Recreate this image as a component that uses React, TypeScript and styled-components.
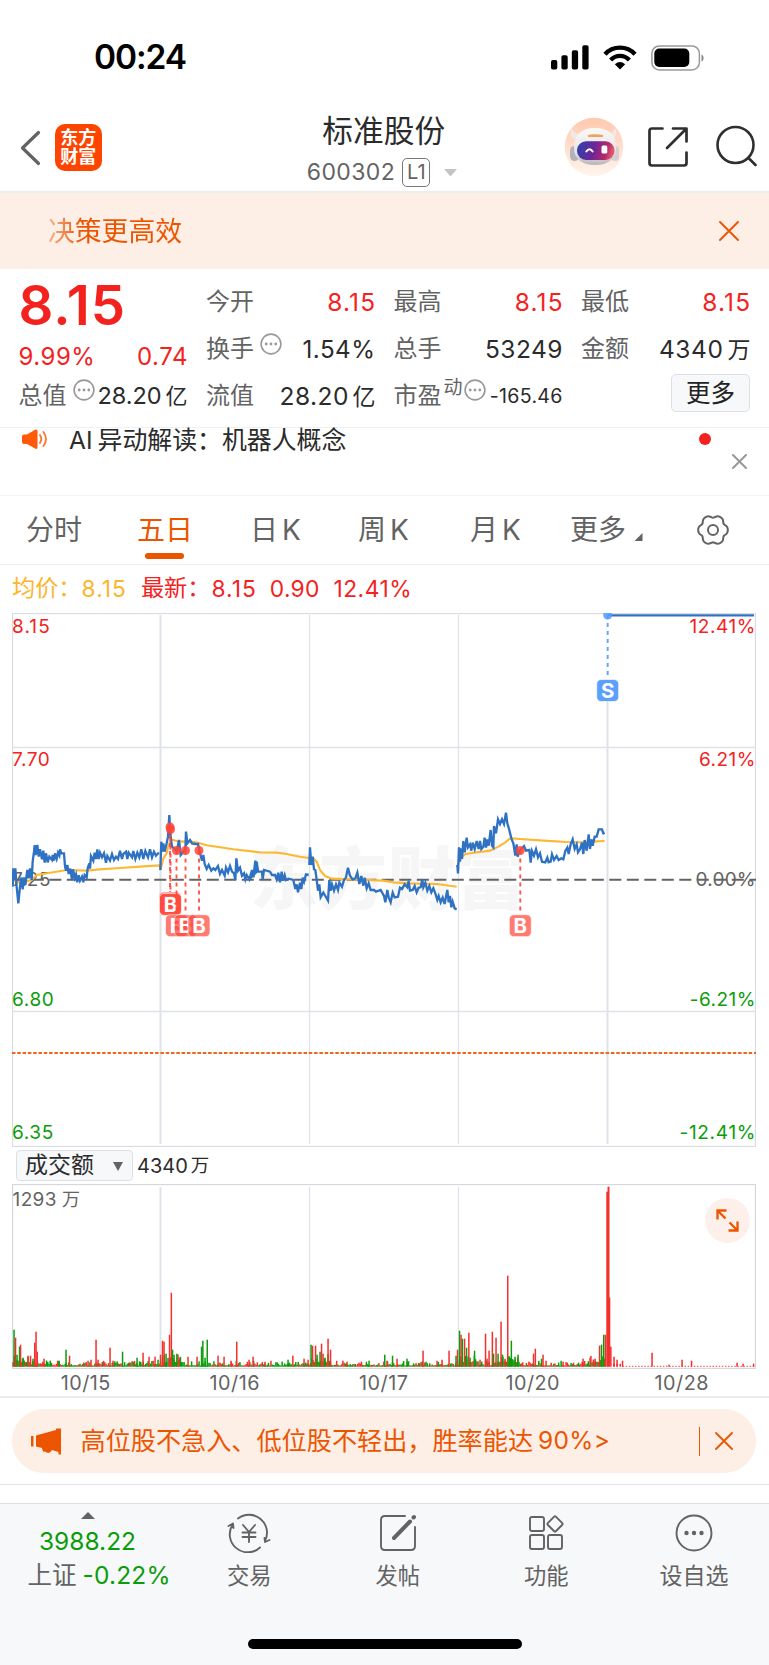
import React from "react";
import styled, { createGlobalStyle, css } from "styled-components";

const RED = "#f4221f";
const GREEN = "#0a9d0a";
const ORANGE = "#ec5500";
const GREY = "#636363";
const DARK = "#2b2b2b";

const Global = createGlobalStyle`
  * { box-sizing: border-box; }
  body {
    margin: 0;
    background: #fff;
    font-family: Inter, "Noto Sans CJK SC", sans-serif;
    color: ${DARK};
  }
  svg { display: block; flex: none; }
`;

const Screen = styled.div`
  width: 769px;
  height: 1665px;
  display: flex;
  flex-direction: column;
  overflow: hidden;
  background: #fff;
`;

const Txt = styled.span<{ $s: number; $c?: string; $w?: number; $ls?: number; $ml?: number }>`
  font-size: ${(p) => p.$s}px;
  color: ${(p) => p.$c ?? DARK};
  font-weight: ${(p) => p.$w ?? 400};
  letter-spacing: ${(p) => p.$ls ?? 0}px;
  margin-left: ${(p) => p.$ml ?? 0}px;
  margin-right: ${(p) => -(p.$ls ?? 0)}px;
  line-height: 1.2;
  white-space: nowrap;
  flex: none;
`;

const StatusBar = styled.div`
  height: 100px;
  flex: none;
  display: flex;
  align-items: center;
  justify-content: space-between;
  padding: 15px 64px 0 94px;
`;

const StatusIcons = styled.div`
  display: flex;
  align-items: center;
  gap: 14px;
`;

const Header = styled.header`
  height: 93px;
  flex: none;
  display: grid;
  grid-template-columns: 1fr auto 1fr;
  border-bottom: 2px solid #ededee;
`;

const HeaderLeft = styled.div`
  display: flex;
  align-items: center;
  gap: 14px;
  padding: 4px 0 0 20px;
`;

const AppLogo = styled.div`
  width: 46.5px;
  height: 47px;
  border-radius: 10px;
  background: #ff4400;
  color: #fff;
  font-weight: 700;
  font-size: 18px;
  line-height: 19px;
  text-align: center;
  padding-top: 4px;
`;

const HeaderTitle = styled.div`
  display: flex;
  flex-direction: column;
  align-items: center;
  padding: 13px 1.5px 0 0;
`;

const CodeRow = styled.div`
  display: flex;
  align-items: center;
  margin-top: 8.500px;
  padding-right: 4px;
`;

const LevelTag = styled.span`
  width: 28px;
  height: 29px;
  border: 1.5px solid #777;
  border-radius: 5px;
  color: ${GREY};
  font-size: 20px;
  line-height: 27px;
  text-align: center;
  margin: 0 13.5px 0 7.5px;
`;

const HeaderRight = styled.div`
  display: flex;
  align-items: center;
  justify-content: flex-end;
  padding: 3px 12px 0 0;
`;

const Notice = styled.div`
  height: 76px;
  flex: none;
  display: flex;
  align-items: center;
  justify-content: space-between;
  background: #fdeee6;
  padding: 0 30px 0 48px;
`;

const NoticeText = styled(Txt)`
  background: linear-gradient(90deg, rgba(236, 85, 0, 0.4), ${ORANGE} 34px);
  background-clip: text;
  color: transparent;
`;

const Quote = styled.section`
  height: 159px;
  flex: none;
  display: grid;
  grid-template-columns: repeat(4, 169px);
  column-gap: 18.5px;
  padding: 0 0 0 18.5px;
  border-bottom: 1.5px solid #f1f1f1;
`;

const QuoteColumn = styled.div`
  display: flex;
  flex-direction: column;
  padding-top: 10px;
`;

const QuoteRow = styled.div<{ $h?: number }>`
  height: ${(p) => p.$h ?? 47}px;
  display: flex;
  align-items: center;
  justify-content: space-between;
`;

const LabelGroup = styled.div`
  display: flex;
  align-items: center;
  gap: 6px;
`;

const Raised = styled.span`
  display: flex;
  align-items: center;
  gap: 1px;
  margin-bottom: 12px;
`;

const DynamicTag = styled(Txt)`
  margin: 0 0 5px -2px;
`;

const MoreButton = styled.button`
  width: 79px;
  height: 38px;
  margin: 0 0 7px auto;
  padding: 0;
  border: 1.5px solid #dcdfe6;
  border-radius: 5px;
  background: #f7f8fa;
  font: 400 24.5px/36px Inter, "Noto Sans CJK SC", sans-serif;
  color: #222;
`;

const News = styled.div`
  height: 68px;
  flex: none;
  display: flex;
  align-items: flex-start;
  border-bottom: 1.5px solid #f4f4f4;
  padding-left: 22px;
`;

const NewsText = styled.div`
  display: flex;
  margin: -2.5px 0 0 21px;
`;

const NewsEnd = styled.div`
  display: flex;
  margin-left: auto;
  padding: 5px 22px 0 0;
`;

const Dot = styled.span`
  width: 12px;
  height: 12px;
  border-radius: 50%;
  background: ${RED};
`;

const NewsClose = styled.span`
  margin: 21px 0 0 21px;
`;

const Tabs = styled.nav`
  height: 69px;
  flex: none;
  display: flex;
  border-bottom: 1.5px solid #eeeeee;
  padding-left: 26px;
`;

const Tab = styled.div<{ $w: number; $active?: boolean }>`
  width: ${(p) => p.$w}px;
  height: 66px;
  padding-top: 17px;
  font-size: 28px;
  line-height: 34px;
  color: ${(p) => (p.$active ? ORANGE : GREY)};
  white-space: nowrap;
  display: flex;
  flex-direction: column;
  align-items: flex-start;
  ${(p) =>
    p.$active &&
    css`
      &::after {
        content: "";
        width: 39px;
        height: 6px;
        margin: 6px 0 0 8px;
        border-radius: 3px;
        background: ${ORANGE};
      }
    `}
`;

const TabLabel = styled.span`
  display: flex;
  gap: 4px;
`;

const Legend = styled.div`
  height: 48px;
  flex: none;
  display: flex;
  align-items: center;
  padding-left: 12px;
`;

const ChartArea = styled.div`
  width: 744px;
  height: 534px;
  margin-left: 12px;
  flex: none;
`;

const VolumeBar = styled.div`
  height: 37px;
  flex: none;
  display: flex;
  align-items: center;
  padding: 0 0 0 16px;
`;

const Picker = styled.div`
  width: 117px;
  height: 31px;
  display: flex;
  align-items: center;
  justify-content: space-between;
  padding: 1px 9px 0 8px;
  border: 1.5px solid #dcdfe6;
  border-radius: 4px;
  background: #f7f8fa;
`;

const VolumeArea = styled.div`
  position: relative;
  width: 744px;
  height: 185px;
  margin-left: 12px;
  flex: none;
`;

const ExpandButton = styled.button`
  position: absolute;
  right: 6px;
  top: 14px;
  width: 45px;
  height: 45px;
  padding: 0;
  border: 0;
  border-radius: 50%;
  background: #fdf0ea;
  display: grid;
  place-items: center;
`;

const Dates = styled.div`
  height: 29px;
  flex: none;
  display: grid;
  grid-template-columns: repeat(5, 149px);
  padding: 3px 0 0 11px;
  align-items: center;
  justify-items: center;
  border-bottom: 2px solid #ececec;
`;

const PromoWrap = styled.div`
  height: 87px;
  flex: none;
  padding: 11px 13px 0 12px;
  border-bottom: 1.5px solid #e2e4e6;
`;

const Promo = styled.div`
  height: 64px;
  border-radius: 32px;
  background: #fdeee6;
  display: flex;
  align-items: center;
  padding: 0 23px 0 19px;
`;

const PromoDivider = styled.i`
  width: 1.5px;
  height: 29px;
  margin-left: auto;
  margin-right: 15px;
  background: ${ORANGE};
`;

const Nav = styled.footer`
  height: 163px;
  margin-top: 17.5px;
  flex: none;
  display: flex;
  flex-direction: column;
  align-items: center;
  background: #f7f8fa;
  border-top: 1.5px solid #dfe0e3;
`;

const NavItems = styled.div`
  width: 769px;
  height: 135.5px;
  display: grid;
  grid-template-columns: 175px 148.5px 148.5px 148.5px 147px;
`;

const NavItem = styled.div`
  display: flex;
  flex-direction: column;
  align-items: center;
  padding-top: 9.5px;
  gap: 9.5px;
`;

const IndexItem = styled.div`
  display: flex;
  flex-direction: column;
  align-items: center;
  padding-top: 8px;
`;

const IndexLine = styled.div<{ $top: number; $indent?: number }>`
  display: flex;
  align-items: center;
  margin-top: ${(p) => p.$top}px;
  padding-left: ${(p) => p.$indent ?? 0}px;
`;

const HomeIndicator = styled.div`
  width: 274px;
  height: 10px;
  border-radius: 5px;
  background: #000;
`;

const Close = ({ size, color, w }: { size: number; color: string; w: number }) => (
  <svg width={size} height={size} viewBox={`0 0 ${size} ${size}`} stroke={color} strokeWidth={w} strokeLinecap="round">
    <path d={`M1 1L${size - 1} ${size - 1}M${size - 1} 1L1 ${size - 1}`} />
  </svg>
);

const Info = () => (
  <svg width="22" height="22" viewBox="0 0 22 22" fill="#999">
    <circle cx="11" cy="11" r="9.9" fill="none" stroke="#999" strokeWidth="1.6" />
    <circle cx="6.2" cy="11" r="1.4" />
    <circle cx="11" cy="11" r="1.4" />
    <circle cx="15.8" cy="11" r="1.4" />
  </svg>
);

const Robot = () => (
  <svg width="60" height="60" viewBox="0 0 60 60">
    <defs>
      <linearGradient id="halo" x1="0" y1="0" x2="0" y2="1">
        <stop offset="0" stopColor="#ffc8ad" />
        <stop offset="1" stopColor="#fff5ef" />
      </linearGradient>
      <linearGradient id="visor" x1="0" y1="0" x2="1" y2="0.15">
        <stop offset="0" stopColor="#2747ad" />
        <stop offset="0.5" stopColor="#6d2497" />
        <stop offset="0.85" stopColor="#b52a6c" />
        <stop offset="1" stopColor="#e0566a" />
      </linearGradient>
      <linearGradient id="shell" x1="0" y1="0" x2="0" y2="1">
        <stop offset="0" stopColor="#fbf9f8" />
        <stop offset="0.7" stopColor="#e6e2e3" />
        <stop offset="1" stopColor="#b9b3b8" />
      </linearGradient>
    </defs>
    <circle cx="30" cy="30" r="29.2" fill="url(#halo)" />
    <path d="M8 11c-3 4 -1 10 4 12l7-6c-5 1-10-1-11-6zM51 11c3 4 1 10-4 12l-7-6c5 1 10-1 11-6z" fill="#efe9e7" />
    <rect x="6" y="29" width="9" height="15" rx="4.5" fill="#b5b1ba" />
    <rect x="47" y="29" width="8" height="15" rx="4" fill="#d5cfd3" />
    <path d="M10 31C10 17 18 11 31 11s21 6 21 20c0 11-8 17-21 17S10 42 10 31z" fill="url(#shell)" />
    <path d="M24 18q6-1.500 15 0v2H24z" fill="#eda25f" />
    <rect x="13" y="24.3" width="37.5" height="18.7" rx="9" fill="url(#visor)" />
    <path d="M22.300 34.500q3.200-4.500 6.400 0" fill="none" stroke="#fff" strokeWidth="2" strokeLinecap="round" />
    <rect x="37.5" y="28.5" width="5.8" height="8" rx="1.5" fill="#fff" />
  </svg>
);

const gearPoints = Array.from({ length: 120 }, (_, i) => {
  const a = (i / 120) * Math.PI * 2;
  const r = 13.8 + 1.25 * Math.cos(6 * a) - 0.25 * Math.cos(12 * a);
  return `${(r * Math.cos(a)).toFixed(2)},${(r * Math.sin(a)).toFixed(2)}`;
}).join(" ");

const Gear = () => (
  <svg width="32" height="34" viewBox="-16 -17 32 34" fill="none" stroke={GREY} strokeWidth="2" strokeLinejoin="round">
    <polygon points={gearPoints} />
    <circle r="5" />
  </svg>
);

/* Intraday traces, three units to a pixel, origin at (0, 790) of the page */
const shift = (s: string, dx: number) =>
  s.trim().split(/\s+/).map((p) => {
    const [x, y] = p.split(",").map(Number);
    return `${x + dx},${y}`;
  }).join(" ");

const day1 = "38,290 40,235 44,270 46,235 50,290 55,340 60,290 64,262 68,298 72,262 76,285 82,240 86,265 90,235 95,270 98,215 102,185 104,165 107,195 112,165 116,200 120,178 126,208 130,182 134,218 138,190 143,217 148,200 156,210 158,195 162,212 165,190 170,206 174,188 178,196 180,178 184,190 192,190 195,228 198,242 202,225 206,252 211,236 216,270 219,238 224,264 228,253 232,277 236,256 240,272 246,260 250,277 254,255 260,262 263,235 268,220 270,236 273,198 280,212 284,188 288,207 292,178 296,207 300,188 306,202 312,190 318,218 322,198 330,212 336,192 342,210 348,200 354,207 360,182 366,207 370,192 378,185 382,207 386,188 396,202 400,183 406,207 412,188 418,202 424,178 430,207 436,183 444,202 450,178 456,202 462,185 468,197 474,190 478,190";
const day2 =
  "481,240 484,155 487,185 490,160 494,185 500,160 504,140 508,75 511,130 516,170 522,175 530,185 537,150 542,195 550,185 556,180 558,125 562,160 570,150 576,160 586,162 594,162 600,190 606,212 610,195 614,222 620,237 626,225 634,242 640,235 646,240 654,228 660,252 666,240 674,257 678,233 684,247 690,228 696,245 702,250 706,270 709,205 714,242 720,233 726,257 732,250 736,268 740,255 748,268 756,240 760,262 766,238 770,215 774,242 " +
  shift("0,265 6,250 12,245 16,212 20,245 36,245 38,268 42,240 60,245 66,255 75,255 80,268 85,248 90,277 95,245 98,272 104,255 108,270 116,266 130,270 136,297 140,283 144,307 150,278 154,297 158,263 162,275 168,253 176,255", 750);
const day3 = shift("178,225 180,172 184,225 188,200 192,238 196,240 200,268 204,302 208,283 212,322 220,308 226,318 234,332 238,270 242,302 246,283 252,302 258,283 264,300 268,278 276,290 282,270 288,262 294,233 300,257 308,268 316,265 322,248 328,282 334,258 340,287 344,263 350,295 356,280 362,300 372,300 378,305 392,300 402,318 406,337 412,300 416,322 422,337 428,308 434,322 444,320 450,293 456,297 464,283 472,292 476,273 480,302 488,300 494,288 500,307 506,293 512,292 517,268 520,292 526,278 532,302 538,288 544,307 550,295 556,310 562,330 566,318 572,337 578,323 584,342 588,320 592,300 596,337 600,318 604,352 608,335 614,355 620,358", 750);
const day4 =
  shift("622,225 624,250 627,172 630,215 632,175 636,207 640,153 644,187 650,143 654,172 660,163 664,182 668,158 674,177 680,153 686,177 690,153 694,177 700,170 704,143 708,173 712,148 716,167 722,120 726,167 730,172 732,108 738,130 744,88 750,102 756,88 762,102 768,68 772,100", 750) +
  " " +
  shift("208,120 214,145 220,160 226,197 230,163 233,200 238,183 252,168 258,182 268,180 272,218 276,183 282,197 288,178 294,202 300,190 306,215 316,217 322,203 326,217 332,215 336,193 342,210 350,198 356,210 364,205 370,208 376,183 382,173 386,192 392,163 398,148 404,177 410,163 414,187 420,178 426,158 430,192 434,150 440,182 446,133 450,177 454,148 458,167 464,140 470,140 476,118 486,118 490,130 494,128", 1320);

const avg1 = "38,270 60,278 95,270 110,255 150,248 200,240 260,242 300,238 360,234 420,230 478,226 482,240 490,205 500,190 506,165 512,150 520,150 536,155 570,154 594,158 620,166 700,178 780,187 830,188 860,192 900,200 928,204 940,205 950,215 960,240 975,258 995,266 1050,268 1150,272 1180,277 1230,280 1310,282 1350,287 1370,290";
const avg2 = shift("622,230 630,205 645,193 670,188 720,182 745,170 765,158 778,147 785,145 810,147 870,151 950,156 1010,157 1040,154 1064,153", 750);

const grid = [160.5, 309.5, 458.5, 607.5];

const Marker = ({ x, y, dot, fill = "#ff4436", o = 0.7, label = "B" }: { x: number; y: number; dot: number; fill?: string; o?: number; label?: string }) => (
  <g>
    <path d={`M${x} ${dot}V${y - 11}`} stroke={fill} strokeWidth="1.9" strokeDasharray="4 4" opacity="0.9" />
    <circle cx={x} cy={dot} r="4.5" fill={fill} opacity="0.85" />
    <rect x={x - 11} y={y - 11} width="22" height="22" rx="4.5" fill={fill} stroke="#fff" strokeWidth="0.7" opacity={o} />
    <text x={x} y={y + 7.5} fontSize="20.5" fontWeight="700" fill="#fff" textAnchor="middle">{label}</text>
  </g>
);

/* price level, its change, baseline, colour, and the letter spacing of both labels */
const levels: [string, string, number, string, number, number][] = [
  ["8.15", "12.41%", 633, RED, 1.1, 0.6],
  ["7.70", "6.21%", 766, RED, 0.6, 0.5],
  ["7.25", "0.00%", 886, GREY, 0.5, 0.2],
  ["6.80", "-6.21%", 1006, GREEN, 0.6, 0.5],
  ["6.35", "-12.41%", 1139, GREEN, 0.6, 0.7],
];

const PriceChart = () => (
  <svg width="744" height="534" viewBox="12 613 744 534" fontFamily='Inter, "Noto Sans CJK SC", sans-serif'>
    <text x="250" y="904" fontSize="68" fontWeight="900" letterSpacing="1" fill="#f6f6f6">东方财富</text>
    <g fill="none" stroke="#dfe2e9" strokeWidth="1.3">
      <rect x="12.5" y="613.5" width="743" height="533" stroke="#d9dce2" />
      <path d="M12 747.500H756M12 1011.500H756" />
      {grid.map((x, i) => <path key={x} d={`M${x} 615V1144`} strokeWidth={i === 0 || i === 3 ? 2 : 1.2} />)}
    </g>
    <path d="M12 879.7H756" stroke="#636363" strokeWidth="2" strokeDasharray="12 5.5" strokeDashoffset="-2.3" />
    <path d="M12 1053H756" stroke="#f0651c" strokeWidth="2" strokeDasharray="3.5 1.8" />
    <g fontSize="19">
      {levels.map(([price, change, y, color, lsPrice, lsChange]) => (
        <g key={price} fill={color}>
          <text x="12" y={y} letterSpacing={lsPrice}>{price}</text>
          <text x={755.5 + lsChange} y={y} letterSpacing={lsChange} textAnchor="end">{change}</text>
        </g>
      ))}
    </g>
    <g transform="translate(0 790) scale(0.33333)" fill="none" strokeLinejoin="miter">
      <g stroke="#fdb833" strokeWidth="6.3">
        <polyline points={avg1} />
        <polyline points={avg2} />
      </g>
      <g stroke="#2f72c3" strokeWidth="7">
        {[day1, day2, day3, day4].map((d, i) => <polyline key={i} points={d} />)}
      </g>
    </g>
    <path d="M608 615.4H754" stroke="#2f72c3" strokeWidth="2.2" />
    <Marker x={170} y={903} dot={827} />
    <Marker x={170.5} y={904.5} dot={829.5} o={0.85} />
    <Marker x={176.5} y={925.7} dot={850.5} />
    <Marker x={185.5} y={925.7} dot={850.5} />
    <Marker x={199} y={925.7} dot={850.5} />
    <Marker x={520.3} y={925.7} dot={850.5} />
    <path d="M607.7 616V680" stroke="#fff" strokeWidth="2.5" />
    <Marker x={607.7} y={690.5} dot={615} fill="#549bff" o={0.95} label="S" />
  </svg>
);

/* Volume spikes: x, height, up(1)/down(0) */
const spikes: number[][] = [
  [14, 37, 0], [15.5, 29, 1], [17, 12, 0], [19.5, 20, 0], [20.5, 22, 1], [23, 9, 0], [28, 11, 1], [30.5, 11, 1], [33, 8, 0], [34.7, 24, 1], [36, 35, 1], [37.2, 15, 1],
  [44, 8, 1], [59, 6, 0], [66, 17, 0], [69.5, 11, 1], [88, 6, 1], [91, 7, 1], [96, 27, 1], [98, 7, 1], [110, 19, 1], [113, 6, 1], [122.5, 15, 0], [137, 9, 0], [143, 14, 1], [149, 10, 1], [155, 10, 1], [158, 7, 0],
  [160.5, 12, 1], [162.5, 26, 1], [164, 25, 1], [166, 13, 0], [169.5, 32, 1], [171.3, 74, 1], [172.5, 17, 0], [174, 12, 0], [176.8, 13, 0], [179, 9, 1], [188, 10, 1], [197, 10, 1], [201.5, 20, 0], [202.8, 26, 0], [205, 9, 0], [207.2, 27, 0], [218, 11, 1], [224, 10, 1], [231, 6, 1], [236.7, 25, 1], [249, 7, 1], [253, 10, 1], [265, 5, 1],
  [288, 7, 0], [292.8, 11, 1], [304, 8, 1], [308, 7, 1], [311, 22, 0], [312.5, 21, 1], [315.5, 21, 1], [317, 12, 0], [320, 15, 0], [321.5, 23, 1], [323, 13, 1], [325, 9, 0], [328, 28, 1], [330.5, 17, 1],
  [347, 5, 1], [369, 6, 0], [384.7, 12, 0], [387, 6, 1], [392.5, 11, 0], [397, 8, 1], [407, 8, 0], [423, 16, 1], [437, 6, 1], [442, 7, 1], [449, 16, 1], [456, 11, 0], [457.5, 17, 1],
  [459.5, 36, 0], [461, 32, 1], [462.3, 28, 0], [464.5, 28, 1], [466.5, 19, 0], [468.8, 34, 1], [470, 9, 0], [474.5, 16, 0], [480, 7, 1], [485.5, 33, 1], [487, 8, 1], [489, 16, 1], [492.3, 35, 1], [493.5, 13, 0], [496, 29, 1], [498, 13, 0], [501, 45, 1], [502.5, 12, 0], [505, 8, 1], [507.7, 91, 1], [509, 10, 0], [511.3, 26, 0], [515, 10, 0], [518, 12, 0],
  [533.5, 13, 1], [535.3, 18, 1], [541.5, 8, 0], [543, 12, 1], [546, 6, 1], [563, 5, 1], [583, 8, 1], [590, 9, 1], [595, 8, 1], [599.5, 21, 1], [601.5, 22, 0], [603.7, 32, 0], [605.5, 32, 1], [607, 175, 1], [608.2, 180, 1], [609.5, 69, 1], [610.8, 20, 1], [614, 10, 1], [617, 7, 1], [622.5, 6, 1],
  [652, 14, 1], [669, 2, 1], [682, 7, 1], [691.5, 6, 1], [737, 4, 1], [743, 3, 1], [753.5, 3, 1],
];

const base: number[][] = [];
for (let i = 0; i < 478; i++) {
  const x = 13 + i * 1.24;
  if (x > 611) break;
  const r = (Math.sin(i * 12.9898) * 43758.5453) % 1;
  const v = Math.abs(r);
  const open = [13, 164, 311, 459].some((s) => x >= s && x < s + 18) || (x > 497 && x < 518) || x > 590;
  base.push([x, (open ? 4.5 : 1.2) + v * v * (open ? 8 : 5), (i * 7 + Math.floor(v * 10)) % 5 < 2 ? 1 : 0]);
}
for (let x = 614; x < 755; x += 3.1) base.push([x, 0.9 + (x < 622 ? 2 : 0), 1]);

const VolumeChart = () => (
  <svg width="744" height="185" viewBox="12 1184 744 185" fontFamily='Inter, "Noto Sans CJK SC", sans-serif'>
    <g fill="none" stroke="#dfe2e9" strokeWidth="1.3">
      <rect x="12.5" y="1184.5" width="743" height="184" stroke="#d5d8de" />
      {grid.slice(0, 3).map((x, i) => <path key={x} d={`M${x} 1187V1366`} strokeWidth={i === 0 ? 2 : 1.2} />)}
    </g>
    {[...base, ...spikes].map(([x, h, up], i) => (
      <rect key={i} x={x - 0.7} y={1366.7 - h} width={h > 100 ? 2 : 1.5} height={h} fill={up ? "#f4302c" : "#0a9d0a"} />
    ))}
    <text x="12.5" y="1206" fontSize="19" letterSpacing="0.4" fill={GREY}>1293</text>
    <text x="62" y="1206" fontSize="18" fill={GREY}>万</text>
  </svg>
);

const navStroke = { fill: "none", stroke: GREY, strokeWidth: 1.9, strokeLinecap: "round" as const, strokeLinejoin: "round" as const };

export default function App() {
  return (
    <>
      <Global />
      <Screen>
        <StatusBar>
          <Txt $s={33.5} $w={600} $c="#000" $ls={-1.1}>00:24</Txt>
          <StatusIcons>
            <svg width="38" height="25" viewBox="0 0 38 25">
              <rect x="0" y="15" width="6.3" height="9.5" rx="1.8" />
              <rect x="10.4" y="10.3" width="6.3" height="14.2" rx="1.8" />
              <rect x="20.8" y="5.2" width="6.3" height="19.3" rx="1.8" />
              <rect x="31.3" y="0.2" width="6.3" height="24.3" rx="1.8" />
            </svg>
            <svg width="34" height="25" viewBox="0 0 34 25" fill="none" stroke="#000" strokeWidth="4.3">
              <path d="M2 9.200C10 0.400 24 0.400 32 9.200" />
              <path d="M7.600 15C13 9.600 21 9.600 26.400 15" />
              <path d="M17 24.500L11.800 19.300Q17 14.800 22.200 19.300Z" fill="#000" stroke="none" />
            </svg>
            <svg width="54" height="26" viewBox="0 0 54 26">
              <rect x="0.9" y="0.9" width="47.5" height="24" rx="7.5" fill="none" stroke="#999" strokeWidth="1.5" />
              <rect x="3.3" y="3.5" width="35" height="18.5" rx="5" />
              <path d="M50.500 9.500c2.800 1 2.800 6 0 7z" fill="#888" />
            </svg>
          </StatusIcons>
        </StatusBar>

        <Header>
          <HeaderLeft>
            <svg width="21" height="36" viewBox="0 0 21 36" fill="none" stroke={GREY} strokeWidth="3.2" strokeLinecap="round" strokeLinejoin="round">
              <path d="M18.500 2.500L2.500 18L18.500 33.500" />
            </svg>
            <AppLogo>东方<br />财富</AppLogo>
          </HeaderLeft>
          <HeaderTitle>
            <Txt $s={30.7}>标准股份</Txt>
            <CodeRow>
              <Txt $s={23} $c={GREY} $ls={0.4}>600302</Txt>
              <LevelTag>L1</LevelTag>
              <svg width="13" height="8" viewBox="0 0 13 8" fill="#c4c4c4"><path d="M0 0H13L6.500 7.500Z" /></svg>
            </CodeRow>
          </HeaderTitle>
          <HeaderRight>
            <Robot />
            <svg width="92" height="44" viewBox="624 126 92 44" fill="none" stroke="#2f2f2f" strokeWidth="2.7" strokeLinecap="round" strokeLinejoin="round">
              <path d="M662.500 129.500H652Q649.500 129.500 649.500 132V164Q649.500 166.500 652 166.500H684Q686.500 166.500 686.500 164V153.500M673 129.500H686.500V142.500M686 130L667 149" />
            </svg>
            <svg width="41" height="44" viewBox="715 126 41 44" fill="none" stroke="#2f2f2f" strokeWidth="2.6" strokeLinecap="round">
              <circle cx="734.5" cy="146" r="18" />
              <path d="M747.500 159L754.500 166" />
            </svg>
          </HeaderRight>
        </Header>

        <Notice>
          <NoticeText $s={26.8}>决策更高效</NoticeText>
          <Close size={20} color={ORANGE} w={1.9} />
        </Notice>

        <Quote>
          <QuoteColumn>
            <QuoteRow $h={53}><Txt $s={54.5} $w={600} $c={RED} $ls={1}>8.15</Txt></QuoteRow>
            <QuoteRow $h={50}>
              <Txt $s={24} $c={RED} $ls={0.5}>9.99%</Txt>
              <Txt $s={24} $c={RED} $ls={0.6}>0.74</Txt>
            </QuoteRow>
            <QuoteRow $h={28}>
              <LabelGroup><Txt $s={24} $c={GREY}>总值</Txt><Raised><Info /></Raised></LabelGroup>
              <Txt $s={23.5} $ls={-0.1}>28.20<Txt $s={22} $ml={4}>亿</Txt></Txt>
            </QuoteRow>
          </QuoteColumn>
          <QuoteColumn>
            <QuoteRow><Txt $s={24} $c={GREY}>今开</Txt><Txt $s={24.4} $c={RED} $ls={1.2}>8.15</Txt></QuoteRow>
            <QuoteRow>
              <LabelGroup><Txt $s={24} $c={GREY}>换手</Txt><Raised><Info /></Raised></LabelGroup>
              <Txt $s={24.2} $ls={0.5}>1.54%</Txt>
            </QuoteRow>
            <QuoteRow><Txt $s={24} $c={GREY}>流值</Txt><Txt $s={24.5} $ls={0.5}>28.20<Txt $s={23} $ml={3.5}>亿</Txt></Txt></QuoteRow>
          </QuoteColumn>
          <QuoteColumn>
            <QuoteRow><Txt $s={24} $c={GREY}>最高</Txt><Txt $s={24.4} $c={RED} $ls={1.2}>8.15</Txt></QuoteRow>
            <QuoteRow><Txt $s={24} $c={GREY}>总手</Txt><Txt $s={24.5} $ls={0.5}>53249</Txt></QuoteRow>
            <QuoteRow>
              <Txt $s={24} $c={GREY}>市盈</Txt>
              <Raised><DynamicTag $s={19} $c={GREY}>动</DynamicTag><Info /></Raised>
              <Txt $s={19.6} $ls={0.3}>-165.46</Txt>
            </QuoteRow>
          </QuoteColumn>
          <QuoteColumn>
            <QuoteRow><Txt $s={24} $c={GREY}>最低</Txt><Txt $s={24.4} $c={RED} $ls={1.2}>8.15</Txt></QuoteRow>
            <QuoteRow><Txt $s={24} $c={GREY}>金额</Txt><Txt $s={24.5} $ls={0.6}>4340<Txt $s={23} $ml={4}>万</Txt></Txt></QuoteRow>
            <QuoteRow><MoreButton>更多</MoreButton></QuoteRow>
          </QuoteColumn>
        </Quote>

        <News>
          <svg width="26" height="22" viewBox="0 0 26 22">
            <path d="M0 8.500Q0 6.500 2 6.500H5L13.500 1.500Q15.500 1 15.500 3V19Q15.500 21.500 13.500 20.800L5 16H2Q0 16 0 14Z" fill="#ff5a0a" />
            <path d="M18 7Q20.500 11 18 15M21.500 4Q26.500 11 21.500 18" fill="none" stroke="#ff7a35" strokeWidth="1.9" strokeLinecap="round" />
          </svg>
          <NewsText>
            <Txt $s={24.5}>AI</Txt>
            <Txt $s={24.9} $ml={5}>异动解读：机器人概念</Txt>
          </NewsText>
          <NewsEnd>
            <Dot />
            <NewsClose><Close size={15} color="#999" w={2} /></NewsClose>
          </NewsEnd>
        </News>

        <Tabs>
          <Tab $w={111}>分时</Tab>
          <Tab $w={113} $active>五日</Tab>
          <Tab $w={108}><TabLabel>日<span>K</span></TabLabel></Tab>
          <Tab $w={112}><TabLabel>周<span>K</span></TabLabel></Tab>
          <Tab $w={100}><TabLabel>月<span>K</span></TabLabel></Tab>
          <Tab $w={127}>
            <TabLabel>更多<svg width="13" height="28" viewBox="-4 0 13 28" fill={GREY}><path d="M8.500 20V28H0.500Z" /></svg></TabLabel>
          </Tab>
          <Tab $w={32}><Gear /></Tab>
        </Tabs>

        <Legend>
          <Txt $s={23.2} $c="#fdb42e">均价：</Txt>
          <Txt $s={22.8} $c="#fdb42e" $ls={1}>8.15</Txt>
          <Txt $s={23.2} $c={RED} $ml={15}>最新：</Txt>
          <Txt $s={22.8} $c={RED} $ls={1} $ml={1}>8.15</Txt>
          <Txt $s={22.8} $c={RED} $ls={0.3} $ml={14}>0.90</Txt>
          <Txt $s={22.8} $c={RED} $ls={0.5} $ml={14}>12.41%</Txt>
        </Legend>

        <ChartArea><PriceChart /></ChartArea>

        <VolumeBar>
          <Picker>
            <Txt $s={23}>成交额</Txt>
            <svg width="10" height="9" viewBox="0 0 10 9" fill={GREY}><path d="M0 0H10L5 9Z" /></svg>
          </Picker>
          <Txt $s={20} $ml={4}>4340</Txt>
          <Txt $s={18.5} $ml={3}>万</Txt>
        </VolumeBar>

        <VolumeArea>
          <VolumeChart />
          <ExpandButton>
            <svg width="23" height="23" viewBox="0 0 23 23" fill="none" stroke={ORANGE} strokeWidth="2.3">
              <path d="M1.500 10.500V1.500H10.500M1.500 1.500L9.500 9.500M21.500 12.500V21.500H12.500M21.500 21.500L13.500 13.500" />
            </svg>
          </ExpandButton>
        </VolumeArea>

        <Dates>
          {["10/15", "10/16", "10/17", "10/20", "10/28"].map((d) => <Txt key={d} $s={19.8} $c={GREY} $ls={0.5}>{d}</Txt>)}
        </Dates>

        <PromoWrap>
          <Promo>
            <svg width="31" height="27" viewBox="0 0 31 27" fill={ORANGE}>
              <path d="M0 8H2.500V18.500H0ZM5 7.500L25 2V0.500H30V26.500H27.500V24L21 22Q18.500 27 14 23.500Q11.500 24.500 11 20L5 18.500Z" />
            </svg>
            <Txt $s={25.15} $c={ORANGE} $ml={18.5}>高位股不急入、低位股不轻出，胜率能达</Txt>
            <Txt $s={24.5} $c={ORANGE} $ls={0.3} $ml={5}>90%&gt;</Txt>
            <PromoDivider />
            <Close size={18} color={ORANGE} w={1.8} />
          </Promo>
        </PromoWrap>

        <Nav>
          <NavItems>
            <IndexItem>
              <svg width="14" height="7" viewBox="0 0 14 7" fill={GREY}><path d="M0 7L7 0L14 7Z" /></svg>
              <IndexLine $top={8}><Txt $s={24.5} $c={GREEN}>3988.22</Txt></IndexLine>
              <IndexLine $top={5.5} $indent={23}>
                <Txt $s={24.5} $c={GREY}>上证</Txt>
                <Txt $s={24.5} $c={GREEN} $ls={0.2} $ml={6}>-0.22%</Txt>
              </IndexLine>
            </IndexItem>
            <NavItem>
              <svg width="44" height="40" viewBox="-22 -20 44 40" {...navStroke}>
                <path d="M-11 -14.500A18 18 0 0 1 16 8M11 14.500A18 18 0 0 1 -16 -9M-20.500 -7L-16 -9.500L-15.500 -5M15.500 5L16 9L20.500 7" />
                <path d="M-6 -8L0 -1L6 -8M0 -1V9M-6.500 -0.500H6.500M-6.500 4H6.500" />
              </svg>
              <Txt $s={22.3} $c={GREY}>交易</Txt>
            </NavItem>
            <NavItem>
              <svg width="40" height="40" viewBox="-20 -20 40 40" {...navStroke}>
                <path d="M7 -17H-13Q-17 -17 -17 -13V13Q-17 17 -13 17H13Q17 17 17 13V-6" />
                <path d="M15.500 -15.500L16 -16M12 -11.500L-4 5" strokeWidth="4" />
              </svg>
              <Txt $s={22.3} $c={GREY}>发帖</Txt>
            </NavItem>
            <NavItem>
              <svg width="40" height="40" viewBox="-20 -20 40 40" {...navStroke}>
                <rect x="-16" y="-16" width="14" height="14" rx="2" />
                <rect x="-16" y="2" width="14" height="14" rx="2" />
                <rect x="2" y="2" width="14" height="14" rx="2" />
                <rect x="3.2" y="-14.8" width="11.5" height="11.5" rx="1.5" transform="rotate(45 9 -9)" />
              </svg>
              <Txt $s={22.3} $c={GREY}>功能</Txt>
            </NavItem>
            <NavItem>
              <svg width="40" height="40" viewBox="-20 -20 40 40" {...navStroke}>
                <circle r="17.5" />
                <g fill={GREY} stroke="none"><circle cx="-7.5" r="2.2" /><circle r="2.2" /><circle cx="7.5" r="2.2" /></g>
              </svg>
              <Txt $s={23} $c={GREY}>设自选</Txt>
            </NavItem>
          </NavItems>
          <HomeIndicator />
        </Nav>
      </Screen>
    </>
  );
}
